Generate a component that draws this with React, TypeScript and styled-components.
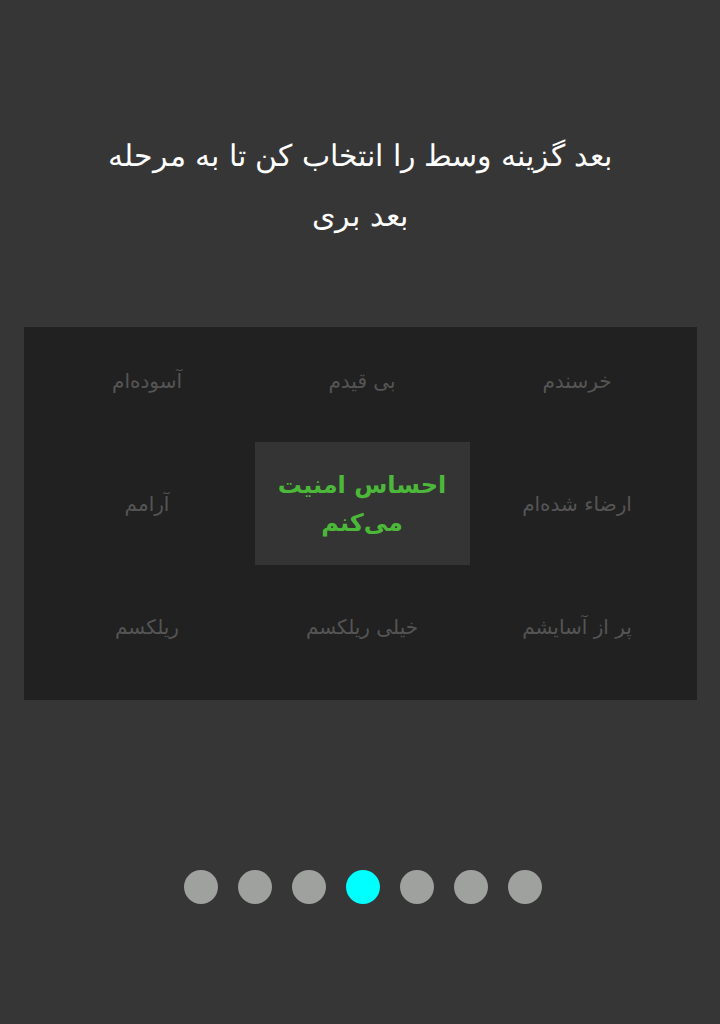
import React from "react";
import styled, { createGlobalStyle } from "styled-components";

const Global = createGlobalStyle`
  html, body { margin: 0; padding: 0; background: #363636; }
  body { font-family: "DejaVu Sans", "Noto Sans", sans-serif; }
`;

const Page = styled.div`
  width: 720px;
  height: 1024px;
  background: #363636;
  display: flex;
  flex-direction: column;
  align-items: center;
`;

const Title = styled.h1`
  margin: 126px 0 0;
  width: 600px;
  text-align: center;
  direction: rtl;
  color: #ffffff;
  font-family: "DejaVu Sans", sans-serif;
  font-weight: 300;
  font-size: 30px;
  line-height: 60px;
`;

const Panel = styled.div`
  margin-top: 81px;
  width: 673px;
  box-sizing: border-box;
  padding: 0 12px 0 16px;
  background: #212121;
  display: grid;
  grid-template-columns: repeat(3, 215px);
  grid-template-rows: 115px 123px 135px;
  direction: rtl;
`;

const Cell = styled.div<{ $active?: boolean; $lift?: number }>`
  display: flex;
  align-items: center;
  justify-content: center;
  text-align: center;
  box-sizing: border-box;
  background: ${(p) => (p.$active ? "#343434" : "transparent")};
  color: ${(p) => (p.$active ? "#4cb83a" : "#555555")};
  font-family: "DejaVu Sans", sans-serif;
  font-size: ${(p) => (p.$active ? "24px" : "20px")};
  font-weight: ${(p) => (p.$active ? 700 : 400)};
  line-height: ${(p) => (p.$active ? "38px" : "normal")};
  padding-bottom: ${(p) => p.$lift ?? 0}px;
`;

const Dots = styled.div`
  margin-top: 170px;
  margin-left: 6px;
  display: flex;
  gap: 20px;
`;

const Dot = styled.span<{ $active?: boolean }>`
  width: 34px;
  height: 34px;
  border-radius: 50%;
  background: ${(p) => (p.$active ? "#00ffff" : "#9fa19f")};
`;

const items: React.ReactNode[] = [
  "خرسندم",
  "بی قیدم",
  "آسوده‌ام",
  "ارضاء شده‌ام",
  <>
    احساس امنیت
    <br />
    می‌کنم
  </>,
  "آرامم",
  "پر از آسایشم",
  "خیلی ریلکسم",
  "ریلکسم",
];

export default function App() {
  return (
    <Page>
      <Global />
      <Title>
        بعد گزینه وسط را انتخاب کن تا به مرحله
        <br />
        بعد بری
      </Title>
      <Panel>
        {items.map((t, i) => (
          <Cell
            key={i}
            $active={i === 4}
            $lift={i < 3 ? 8 : i > 5 ? 12 : 0}
          >
            {t}
          </Cell>
        ))}
      </Panel>
      <Dots>
        {Array.from({ length: 7 }).map((_, i) => (
          <Dot key={i} $active={i === 3} />
        ))}
      </Dots>
    </Page>
  );
}
